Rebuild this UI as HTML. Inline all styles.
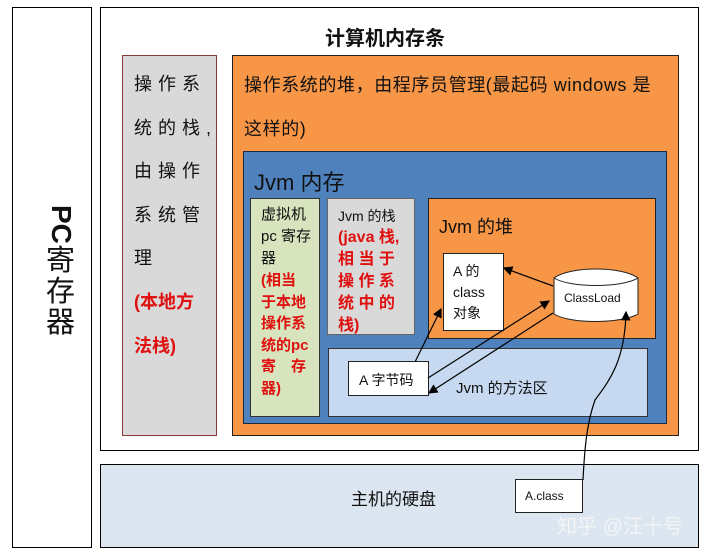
<!DOCTYPE html>
<html><head><meta charset="utf-8"><style>
body{margin:0;width:705px;height:552px;background:#fff;position:relative;overflow:hidden;font-family:"Liberation Sans","Noto Sans CJK SC",sans-serif;}
div{position:absolute;box-sizing:border-box;}
.t{white-space:nowrap;color:#111;}
.r{color:#e01010;font-weight:bold;}
</style></head><body>
<div style="left:12px;top:7px;width:80px;height:541px;border:1px solid #000;"></div>
<div class="t" style="left:46px;top:205px;width:40px;font-size:28px;font-weight:bold;line-height:30px;">
<div style="left:0;top:0;transform:rotate(90deg);transform-origin:15px 15px;">PC</div></div>
<div class="t" style="left:46px;top:246px;font-size:29px;line-height:31px;">寄<br>存<br>器</div>
<div style="left:100px;top:7px;width:599px;height:444px;border:1px solid #000;"></div>
<div class="t" style="left:325px;top:22px;font-size:20px;font-weight:bold;">计算机内存条</div>
<div style="left:122px;top:55px;width:95px;height:381px;background:#d9d9d9;border:1px solid #8b3a3a;"></div>
<div class="t" style="left:134px;top:63px;font-size:18px;line-height:43.5px;letter-spacing:6px;">操作系<br>统的栈,<br>由操作<br>系统管<br>理</div>
<div class="t r" style="left:134px;top:281px;font-size:18px;line-height:43.5px;">(本地方<br>法栈)</div>
<div style="left:232px;top:55px;width:447px;height:381px;background:#f79646;border:1px solid #222;"></div>
<div class="t" style="left:244px;top:63px;font-size:18px;line-height:44px;letter-spacing:0.6px;">操作系统的堆，由程序员管理(最起码 windows 是<br>这样的)</div>
<div style="left:243px;top:151px;width:424px;height:273px;background:#4f81bd;border:1px solid #1a2a40;"></div>
<div class="t" style="left:254px;top:165px;font-size:22px;">Jvm 内存</div>
<div style="left:250px;top:198px;width:70px;height:219px;background:#d7e4bd;border:1px solid #333;"></div>
<div class="t" style="left:261px;top:204px;font-size:15px;line-height:22px;">虚拟机<br>pc 寄存<br>器</div>
<div class="t r" style="left:261px;top:270px;font-size:15px;line-height:21.5px;">(相当<br>于本地<br>操作系<br>统的pc<br>寄　存<br>器)</div>
<div style="left:327px;top:198px;width:88px;height:137px;background:#d9d9d9;border:1px solid #666;"></div>
<div class="t" style="left:338px;top:206px;font-size:14px;line-height:21px;">Jvm 的栈</div>
<div class="t r" style="left:338px;top:227px;font-size:16px;line-height:22px;">(java 栈,<br>相 当 于<br>操 作 系<br>统 中 的<br>栈)</div>
<div style="left:428px;top:198px;width:228px;height:141px;background:#f79646;border:1px solid #222;"></div>
<div class="t" style="left:439px;top:213px;font-size:18px;">Jvm 的堆</div>
<div style="left:443px;top:253px;width:61px;height:78px;background:#fff;border:1px solid #222;"></div>
<div class="t" style="left:453px;top:261px;font-size:14px;line-height:21px;">A 的<br>class<br>对象</div>
<div style="left:328px;top:348px;width:320px;height:69px;background:#c6d9f1;border:1px solid #333;"></div>
<div class="t" style="left:456px;top:377px;font-size:15px;">Jvm 的方法区</div>
<div style="left:348px;top:361px;width:81px;height:35px;background:#fff;border:1px solid #222;"></div>
<div class="t" style="left:359px;top:370px;font-size:14px;">A 字节码</div>
<div style="left:100px;top:464px;width:599px;height:84px;background:#dce6f1;border:1px solid #000;"></div>
<div class="t" style="left:351px;top:485px;font-size:17px;">主机的硬盘</div>
<div style="left:515px;top:479px;width:68px;height:34px;background:#fff;border:1px solid #222;"></div>
<div class="t" style="left:525px;top:489px;font-size:12px;">A.class</div>
<div class="t" style="left:557px;top:510px;font-size:20px;color:rgba(245,245,245,0.9);">知乎 @汪十号</div>
<svg style="position:absolute;left:0;top:0" width="705" height="552">
<defs><marker id="a" markerWidth="8" markerHeight="8" refX="7" refY="4" orient="auto"><path d="M0,0 L8,4 L0,8 z" fill="#000"/></marker></defs>
<path d="M554,278 C570,266 622,266 638,278 L638,314 C620,324 570,324 554,314 Z" fill="#fff" stroke="#222"/>
<path d="M554,278 C570,288 622,288 638,278" fill="none" stroke="#222"/>
<text x="564" y="302" font-size="12" font-family="Liberation Sans" fill="#111">ClassLoad</text>
<g stroke="#000" stroke-width="1.2" fill="none">
<line x1="553" y1="286" x2="504" y2="268" marker-end="url(#a)"/>
<line x1="415" y1="362" x2="441" y2="309" marker-end="url(#a)"/>
<line x1="428" y1="378" x2="549" y2="301" marker-end="url(#a)"/>
<line x1="553" y1="313" x2="429" y2="393" marker-end="url(#a)"/>
<path d="M583,480 C585,440 588,420 595,400 C610,380 625,360 626,312" marker-end="url(#a)"/>
</g></svg>
</body></html>
